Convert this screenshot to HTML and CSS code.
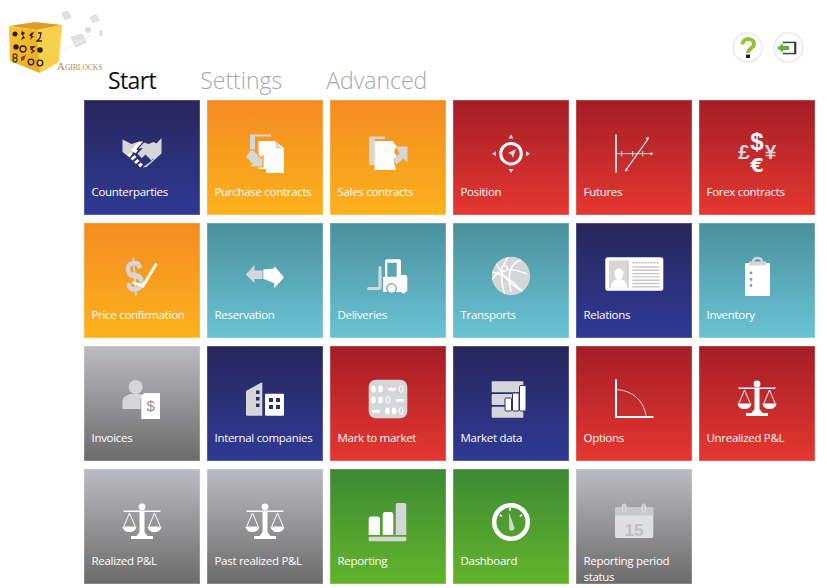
FILE: index.html
```html
<!DOCTYPE html>
<html lang="en">
<head>
<meta charset="utf-8">
<title>Agiblocks</title>
<link rel="stylesheet" href="styles.css">
</head>
<body>
<svg class="defs" width="0" height="0" aria-hidden="true">
  <symbol id="scale" viewBox="0 0 60 60">
    <circle cx="30" cy="14" r="3.400" fill="#fff"/>
    <path d="M11 17.500h38l-1 1.500H32.500v20l3 4h5.500v3H19v-3h5.500l3-4V19H12z" fill="#fff"/>
    <path d="M17.500 20l-5.500 13M17.500 20l5.500 13M42.500 20l-5.500 13M42.500 20l5.500 13" fill="none" stroke="#fff" stroke-width="1"/>
    <path d="M10.500 33.500h14c-.5 3.500-3 5.500-7 5.500s-6.500-2-7-5.500zM35.500 33.500h14c-.5 3.500-3 5.500-7 5.500s-6.500-2-7-5.500z" fill="#fff"/>
  </symbol>
  <clipPath id="globeClip"><circle cx="30" cy="29" r="19.200"/></clipPath>
</svg>

<header class="top">
  <svg class="logo" width="108" height="90" viewBox="0 0 108 90">
    <defs>
      <linearGradient id="cubeFront" x1="0" y1="0" x2="1" y2="1"><stop offset="0" stop-color="#fbc733"/><stop offset="1" stop-color="#eaa51e"/></linearGradient>
    </defs>
    <path d="M9 26l26-4 27 3-25 5z" fill="#dd9c2c"/>
    <path d="M9 26l28 4 3 43-30-12z" fill="url(#cubeFront)"/>
    <path d="M37 30l25-5-3 37-19 11z" fill="#f8d14c"/>
    <g fill="#2a2118">
      <circle cx="15" cy="34" r="2.500"/><path d="M22 31l3 2-2 2 2 3-4 2 2-4-2-2z"/><path d="M31 33l3-1-2 4 2 0-4 4 1-4-2 0z"/>
      <path d="M38 33h3l-1 5-3 3h5" fill="none" stroke="#2a2118" stroke-width="1.300"/>
      <circle cx="16" cy="47" r="2.700"/><circle cx="23" cy="49" r="3" fill="none" stroke="#2a2118" stroke-width="1.300"/>
      <path d="M30 47h4l-3 2 3 2-3 2" fill="none" stroke="#2a2118" stroke-width="1.300"/><circle cx="40" cy="50" r="2.800"/>
      <circle cx="15" cy="56" r="2" fill="none" stroke="#5a3a18" stroke-width="1.300"/><circle cx="15" cy="60" r="2" fill="none" stroke="#5a3a18" stroke-width="1.300"/>
      <path d="M21 57l5-2-2 5-3 1z" fill="#7a4a18"/>
      <circle cx="31" cy="62" r="2.800" fill="none" stroke="#2a2118" stroke-width="1.300"/><circle cx="40" cy="63" r="2.800" fill="none" stroke="#2a2118" stroke-width="1.300"/>
    </g>
    <g fill="#e2e2e2" stroke="#c4c4c4" stroke-width=".5">
      <path d="M62 13l6-2 3 6-6 3z"/><path d="M90 17l6-2 3 5-6 3z"/><path d="M71 37l11-3 4 8-10 5z"/>
      <circle cx="88" cy="30" r="2.500"/><path d="M100 31l2 0v5h-2z"/>
    </g>
    <path d="M62 52l28-16" stroke="#f0f0f0" stroke-width="1"/>
    <text class="logo-text" x="57" y="70">A<tspan class="logo-small">GIBLOCKS</tspan></text>
  </svg>

  <nav class="tabs">
    <span class="tab tab-active">Start</span>
    <span class="tab">Settings</span>
    <span class="tab">Advanced</span>
  </nav>

  <div class="actions">
    <span class="round">
      <svg class="round-icon" viewBox="0 0 30 30">
        <path d="M9.500 11.500C9.500 8 12 6 15.200 6S21 8 21 11c0 4-6 4.500-6 9" fill="none" stroke="#8cc63f" stroke-width="4"/>
        <rect x="13" y="21.500" width="4" height="3.500" fill="#222"/>
      </svg>
    </span>
    <span class="round">
      <svg class="round-icon" viewBox="0 0 30 30">
        <path d="M9 9.800V9h13v12H9v-.8h11.500V9.800z" fill="#333" stroke="#333" stroke-width=".6"/>
        <path d="M3 15l6-4.500V13h6v4H9v2.500z" fill="#5fb336"/>
      </svg>
    </span>
  </div>
</header>

<main class="grid">
  <a class="tile navy">
    <svg class="icon" viewBox="0 0 60 60">
      <path d="M10.500 15.500l9 4.500 6-2 4 1.500-10 11-2 3-7-5.500z" fill="#d5d6d8"/>
      <path d="M49.500 14v15.500l-5 4.500-10 9-4 .5 7-5 4-3.500-9-11-6 .5 5.500-6 4.500 1.500 5-2 3 1.500z" fill="#d5d6d8"/>
      <path d="M33 24l8.500 10-2 2.500-6-6-3 3-1 .5-4-4.500 6-6z" fill="#d5d6d8"/>
      <path d="M19 26l8-8.500h4l-7 7.500 2 1.500-2.500 3z" fill="#fff"/>
      <path d="M15.500 31l3-2.500 2 2-3 2.500zM18.500 34.500l4-3.500 2 2-4 3.500zM22 38l3.500-3 2 2-3.500 3zM26 41l2.500-2.500 2.500 2-3 3z" fill="#fff"/>
    </svg>
    <span class="label">Counterparties</span>
  </a>

  <a class="tile orange">
    <svg class="icon" viewBox="0 0 60 60">
      <path d="M15 10.500h21v2H20v14h-5z" fill="#d5d6d8"/>
      <path d="M23.500 17h16l9.500 7v25H31v-4h-7.500z" fill="#fff"/>
      <path d="M40 17.500l1 6.500 6.500 1" fill="#d5d6d8"/>
      <path d="M15 26h4l7 8 2-2v11H14l3-3-6.500-7z" fill="#d5d6d8" stroke="#f7a21e" stroke-width="1.200"/>
    </svg>
    <span class="label">Purchase contracts</span>
  </a>

  <a class="tile orange">
    <svg class="icon" viewBox="0 0 60 60">
      <path d="M11 12.500h16v2.500H16.500v26H11z" fill="#d5d6d8"/>
      <path d="M16.500 17h18l4 5-2.500 6 3 5-3 5 2 8H16.500z" fill="#fff"/>
      <path d="M38 22.500h11.500v16l-4-4-7 6-4-5 7-6z" fill="#d5d6d8"/>
    </svg>
    <span class="label">Sales contracts</span>
  </a>

  <a class="tile red">
    <svg class="icon" viewBox="0 0 60 60">
      <circle cx="30" cy="29.700" r="10.300" fill="none" stroke="#fff" stroke-width="3"/>
      <path d="M30 10.500l2.500 4h-5zM30 49l2.500-4h-5zM11 29.700l4-2.500v5zM49 29.700l-4-2.500v5z" fill="#d5d6d8"/>
      <path d="M35 25l-3 9-1.500-3.500-3.500-1.500z" fill="#d5d6d8"/>
    </svg>
    <span class="label">Position</span>
  </a>

  <a class="tile red">
    <svg class="icon" viewBox="0 0 60 60">
      <path d="M12 10.500v38" stroke="#d5d6d8" stroke-width="2" fill="none"/>
      <path d="M13 29.700h35M17.700 27v5.500M28.700 27v5.500M38.700 27v5.500" stroke="#d5d6d8" stroke-width="1" fill="none"/>
      <path d="M49.500 29.700l-3-1.700v3.400z" fill="#d5d6d8"/>
      <path d="M22 46l22-31" stroke="#fff" stroke-width="1.200" fill="none"/>
      <path d="M45 13l-3.500 1.200 2.400 2zM20.800 47.500l3.500-1.200-2.400-2z" fill="#fff"/>
    </svg>
    <span class="label">Futures</span>
  </a>

  <a class="tile red">
    <svg class="icon" viewBox="0 0 60 60">
      <text class="cur cur-big" x="30" y="26" text-anchor="middle">$</text>
      <text class="cur cur-mid" x="17" y="35" text-anchor="middle">£</text>
      <text class="cur cur-mid" x="43.500" y="35" text-anchor="middle">¥</text>
      <text class="cur cur-euro" x="30" y="48.300" text-anchor="middle">€</text>
    </svg>
    <span class="label">Forex contracts</span>
  </a>

  <a class="tile orange">
    <svg class="icon" viewBox="0 0 60 60">
      <text class="dollar" transform="translate(24 45) scale(.72 1) rotate(-6)" text-anchor="middle">$</text>
      <path d="M20.500 35.500l10.500 3.500L44.500 16.500" fill="none" stroke="#fff" stroke-width="2.800"/>
    </svg>
    <span class="label">Price confirmation</span>
  </a>

  <a class="tile teal">
    <svg class="icon" viewBox="0 0 60 60">
      <path d="M10.700 27.500l8.800-9.500v5.500h8v8.500h-8v4z" fill="#d5d6d8"/>
      <path d="M28.300 22.500l11-1V19L49 30.500l-9.700 10.800v-5l-11-4.500z" fill="#fff"/>
    </svg>
    <span class="label">Reservation</span>
  </a>

  <a class="tile teal">
    <svg class="icon" viewBox="0 0 60 60">
      <path d="M29 12.300h12a2 2 0 0 1 2 2V28h4a2.300 2.300 0 0 1 2.300 2.300V43a2 2 0 0 1-2 2H25V30h2V14.300a2 2 0 0 1 2-2zM29.300 15.700v14h9.400v-14z" fill="#fff" fill-rule="evenodd"/>
      <circle cx="33.500" cy="41.500" r="4.800" fill="#fff" stroke="#5da9b7" stroke-width="1.200"/>
      <path d="M22 20.500V40a1.500 1.500 0 0 1-1.500 1.500h-9.800" fill="none" stroke="#d5d6d8" stroke-width="3.200" stroke-linecap="round"/>
      <circle cx="45.500" cy="44" r="2.400" fill="#fff"/>
    </svg>
    <span class="label">Deliveries</span>
  </a>

  <a class="tile teal">
    <svg class="icon" viewBox="0 0 60 60">
      <circle cx="30" cy="29" r="19.200" fill="#d5d6d8"/>
      <g fill="none" stroke="#fff" stroke-width="1.400" clip-path="url(#globeClip)">
        <path d="M15 16c8 16 18 26 33 30"/><path d="M11 25c9 2 22 7 33 24"/><path d="M11 33c5-9 14-15 35-6"/><path d="M27 10c-6 8-9 24-3 37"/><path d="M40 13c-9 3-15 12-10 32"/>
      </g>
      <circle cx="23.500" cy="21.500" r="2.800" fill="#d5d6d8" stroke="#fff" stroke-width="1.300"/>
    </svg>
    <span class="label">Transports</span>
  </a>

  <a class="tile navy">
    <svg class="icon" viewBox="0 0 60 60">
      <rect x="1.300" y="10.300" width="58" height="33.400" rx="2.500" fill="#fff"/>
      <rect x="5" y="13.500" width="20" height="27" fill="#d5d6d8"/>
      <path d="M7 40.500c0-6 3.500-7.500 6-8.500-1.700-1.500-2.500-3.500-2.500-5.500 0-3 1.700-5 4.500-5s4.500 2 4.500 5c0 2-.8 4-2.500 5.500 2.500 1 6 2.500 6 8.500z" fill="#fff"/>
      <path d="M28.500 15.800h27" stroke="#bbb" stroke-width="1.500" stroke-dasharray="2 1"/>
      <path d="M28.500 20h27M28.500 23.300h27M28.500 26.600h27M28.500 29.900h27M28.500 33.200h27M28.500 36.500h27M28.500 39.800h27" stroke="#c6c7ca" stroke-width="1.400"/>
    </svg>
    <span class="label">Relations</span>
  </a>

  <a class="tile teal">
    <svg class="icon" viewBox="0 0 60 60">
      <path d="M26 15c0-5.500 9-5.500 9 0" fill="none" stroke="#d5d6d8" stroke-width="2.500"/>
      <rect x="18" y="16" width="25" height="33" rx="1" fill="#fff"/>
      <rect x="22" y="14.500" width="17" height="4" fill="#d5d6d8"/>
      <circle cx="24" cy="26" r="1.400" fill="#5da9b7"/><circle cx="24" cy="32.500" r="1.400" fill="#5da9b7"/><circle cx="24" cy="38.500" r="1.400" fill="#5da9b7"/>
    </svg>
    <span class="label">Inventory</span>
  </a>

  <a class="tile gray">
    <svg class="icon" viewBox="0 0 60 60">
      <circle cx="23.700" cy="17" r="7" fill="#d5d6d8"/>
      <path d="M10.500 39v-7c0-5 4-7 8-8h10.500l3 3-3.500 2v10z" fill="#d5d6d8"/>
      <path d="M32 23h16v26H29.300V27z" fill="#fff"/>
      <text class="inv-dollar" x="38.700" y="41.300" text-anchor="middle">$</text>
      <path d="M31 25l-1.500 1.500" stroke="#fff" stroke-width="1.200"/>
    </svg>
    <span class="label">Invoices</span>
  </a>

  <a class="tile navy">
    <svg class="icon" viewBox="0 0 60 60">
      <path d="M11 21l15.500-8.500c.5 0 .8.300.8 1V45.700H12a1 1 0 0 1-1-1z" fill="#d5d6d8"/>
      <rect x="21" y="20.500" width="3.500" height="3.500" fill="#27306f"/><rect x="21" y="27" width="3.500" height="3.500" fill="#27306f"/><rect x="21" y="33.500" width="3.500" height="3.500" fill="#27306f"/>
      <rect x="30" y="23.700" width="19" height="22" rx="1" fill="#fff"/>
      <rect x="34" y="28" width="4" height="4" fill="#27306f"/><rect x="41" y="28" width="4" height="4" fill="#27306f"/><rect x="34" y="35" width="4" height="4" fill="#27306f"/><rect x="41" y="35" width="4" height="4" fill="#27306f"/>
    </svg>
    <span class="label">Internal companies</span>
  </a>

  <a class="tile red">
    <svg class="icon" viewBox="0 0 60 60">
      <rect x="10.700" y="9.700" width="38.600" height="38.600" rx="7" fill="#d5d6d8"/>
      <g fill="#fff">
        <ellipse cx="15.500" cy="19" rx="2.300" ry="3.500"/><ellipse cx="22.500" cy="19" rx="2.300" ry="3.500"/><rect x="30" y="18" width="8" height="2.800" rx="1.400"/>
        <ellipse cx="15.500" cy="30" rx="2.300" ry="3.500"/><ellipse cx="22.500" cy="30" rx="2.300" ry="3.500"/><rect x="38" y="29" width="8" height="2.800" rx="1.400"/>
        <rect x="14" y="40" width="8" height="2.800" rx="1.400"/><ellipse cx="29.500" cy="41" rx="2.300" ry="3.500"/><ellipse cx="36" cy="41" rx="2.300" ry="3.500"/>
      </g>
      <g fill="none" stroke="#fff" stroke-width="1">
        <ellipse cx="43" cy="19" rx="2" ry="3.300"/><ellipse cx="30" cy="30" rx="2" ry="3.300"/><ellipse cx="43" cy="41" rx="2" ry="3.300"/>
      </g>
    </svg>
    <span class="label">Mark to market</span>
  </a>

  <a class="tile navy">
    <svg class="icon" viewBox="0 0 60 60">
      <rect x="10.700" y="11.300" width="31.600" height="11" rx="1" fill="#d5d6d8"/>
      <rect x="10.700" y="24" width="31.600" height="11" rx="1" fill="#d5d6d8"/>
      <rect x="10.700" y="36.700" width="31.600" height="11" rx="1" fill="#d5d6d8"/>
      <rect x="24" y="28" width="6.500" height="13" rx="1" fill="#fff" stroke="#2a3175" stroke-width="1"/>
      <rect x="31.500" y="23" width="6.500" height="18" rx="1" fill="#fff" stroke="#2a3175" stroke-width="1"/>
      <rect x="38.500" y="15.500" width="6.500" height="25.500" rx="1" fill="#fff" stroke="#2a3175" stroke-width="1"/>
    </svg>
    <span class="label">Market data</span>
  </a>

  <a class="tile red">
    <svg class="icon" viewBox="0 0 60 60">
      <path d="M12 9.500V47h37.500" fill="none" stroke="#fff" stroke-width="2"/>
      <path d="M13 19.500c14 1 27 10 29 26.500" fill="none" stroke="#d5d6d8" stroke-width="1"/>
    </svg>
    <span class="label">Options</span>
  </a>

  <a class="tile red">
    <svg class="icon"><use href="#scale"/></svg>
    <span class="label">Unrealized P&amp;L</span>
  </a>

  <a class="tile gray">
    <svg class="icon"><use href="#scale"/></svg>
    <span class="label">Realized P&amp;L</span>
  </a>

  <a class="tile gray">
    <svg class="icon"><use href="#scale"/></svg>
    <span class="label">Past realized P&amp;L</span>
  </a>

  <a class="tile green">
    <svg class="icon" viewBox="0 0 60 60">
      <path d="M10.700 42V26a2.500 2.500 0 0 1 2.500-2.500h6.300a2.500 2.500 0 0 1 2.500 2.500v16z" fill="#fff"/>
      <path d="M24.700 42V21.500a2.500 2.500 0 0 1 2.500-2.500h5.600a2.500 2.500 0 0 1 2.500 2.500V42z" fill="#fff"/>
      <path d="M37.700 42V12a2 2 0 0 1 2-2h6.600a2 2 0 0 1 2 2v30z" fill="#d5d6d8"/>
      <rect x="10.700" y="43.700" width="37.600" height="4.600" rx="1" fill="#d5d6d8"/>
    </svg>
    <span class="label">Reporting</span>
  </a>

  <a class="tile green">
    <svg class="icon" viewBox="0 0 60 60">
      <circle cx="30" cy="29" r="16.800" fill="none" stroke="#fff" stroke-width="4.500"/>
      <path d="M28 19.500l5.500 15.500c.7 2.500-4.500 3.800-5.300 1z" fill="#d5d6d8"/>
      <path d="M29 14.800v3M18.800 22l2.200 1.200M41 22l-2.200 1.200" stroke="#fff" stroke-width="1.800" fill="none"/>
    </svg>
    <span class="label">Dashboard</span>
  </a>

  <a class="tile gray">
    <svg class="icon" viewBox="0 0 60 60">
      <rect x="11" y="14" width="38.300" height="31" rx="2" fill="#dedfe1"/>
      <path d="M11 22.500V16a2 2 0 0 1 2-2h34.300a2 2 0 0 1 2 2v6.500z" fill="#c8c9cc"/>
      <rect x="18.500" y="11" width="3.500" height="8" rx="1.700" fill="#c8c9cc" stroke="#dedfe1" stroke-width="1"/>
      <rect x="38" y="11" width="3.500" height="8" rx="1.700" fill="#c8c9cc" stroke="#dedfe1" stroke-width="1"/>
      <text class="cal-num" x="30" y="42.500" text-anchor="middle">15</text>
    </svg>
    <span class="label">Reporting period status</span>
  </a>
</main>
</body>
</html>
```

FILE: styles.css
```css
* { box-sizing: border-box; }

html, body {
  margin: 0;
  padding: 0;
  background: #fff;
}

body {
  width: 827px;
  height: 588px;
  overflow: hidden;
  font-family: "Open Sans", "Liberation Sans", sans-serif;
}

.defs { display: block; height: 0; }

.top {
  display: flex;
  align-items: flex-start;
  height: 100px;
}

.logo { display: block; flex: none; }

.logo-text {
  font-family: "Liberation Serif", serif;
  font-size: 11px;
  fill: #b58a4a;
}
.logo-small { font-size: 7.500px; }

.tabs {
  display: flex;
  gap: 44px;
  padding-top: 64px;
}

.tab {
  font-size: 23px;
  line-height: 32px;
  font-weight: 300;
  color: #a8a8a8;
}

.tab-active {
  color: #111;
  font-weight: 400;
  letter-spacing: -.6px;
}

.actions {
  display: flex;
  gap: 10px;
  margin-left: auto;
  padding: 32px 23px 0 0;
}

.round {
  width: 31px;
  height: 31px;
  border: 2px solid #eeeeee;
  border-radius: 50%;
  display: flex;
  align-items: center;
  justify-content: center;
}

.round-icon {
  flex: none;
  width: 30px;
  height: 30px;
}

.grid {
  display: grid;
  grid-template-columns: repeat(6, 116px);
  grid-auto-rows: 115px;
  column-gap: 7px;
  row-gap: 8px;
  padding-left: 84px;
}

.tile {
  display: flex;
  flex-direction: column;
  padding-top: 24px;
  color: #fff;
  overflow: hidden;
  border: 1px solid rgba(255, 255, 255, .18);
  background-origin: border-box;
}

.navy   { background-image: linear-gradient(#28275b, #2e3a95); }
.orange { background-image: linear-gradient(#f38c21, #fdb11d); }
.red    { background-image: linear-gradient(#a41e26, #e53730); }
.teal   { background-image: linear-gradient(#4b909d, #69c3d4); }
.gray   { background-image: linear-gradient(#bbbcc1, #6b6b6b); }
.green  { background-image: linear-gradient(#3c8a33, #63b42c); }

.icon {
  display: block;
  flex: none;
  width: 60px;
  height: 60px;
  margin: -1px auto 0;
}

.label {
  display: block;
  padding: 0 6.500px;
  font-size: 11.500px;
  line-height: 15.500px;
  letter-spacing: -.3px;
}

.cur { font-family: "Liberation Sans", sans-serif; font-weight: 700; }
.cur-big { font-size: 24px; fill: #fff; }
.cur-mid { font-size: 21px; fill: #d5d6d8; }
.cur-euro { font-family: "DejaVu Sans", sans-serif; font-size: 19px; fill: #fff; }

.dollar { fill: #d5d6d8; font-family: "Liberation Sans", sans-serif; font-weight: 700; font-size: 46px; }
.inv-dollar { fill: #8f8f8f; font-family: "Liberation Sans", sans-serif; font-size: 15px; }
.cal-num { fill: #bfc0c3; font-family: "Liberation Sans", sans-serif; font-weight: 700; font-size: 17px; }
```
